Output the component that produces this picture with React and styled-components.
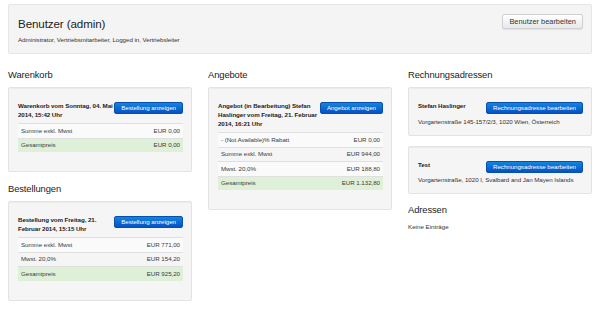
import React from "react";
import styled, { createGlobalStyle } from "styled-components";

const Global = createGlobalStyle`
  html, body { margin: 0; padding: 0; background: #fff; }
  body { font-family: "Liberation Sans", Arial, sans-serif; color: #333; }
  * { box-sizing: border-box; }
`;

const Page = styled.div`
  width: 584px;
  margin: 4px 0 0 8px;
`;

const Hero = styled.div`
  display: flex;
  justify-content: space-between;
  align-items: flex-start;
  background: #f4f4f4;
  border: 1px solid #e6e6e6;
  border-radius: 2px;
  padding: 9px 8px 9px 9px;
`;

const HeroText = styled.div`
  display: flex;
  flex-direction: column;
`;

const H1 = styled.h1`
  margin: 3px 0 0;
  font-size: 11.6px;
  line-height: 14px;
  font-weight: normal;
  letter-spacing: -0.1px;
  color: #222;
`;

const Sub = styled.div`
  margin-top: 5px;
  font-size: 6.2px;
  line-height: 8px;
  letter-spacing: -0.05px;
  color: #333;
`;

const DefaultButton = styled.button`
  font-family: inherit;
  font-size: 7.4px;
  line-height: 9px;
  padding: 2px 6px;
  color: #333;
  background: linear-gradient(#ffffff, #e9e9e9);
  border: 1px solid #d0d0d0;
  border-radius: 2px;
  box-shadow: 0 1px 1px rgba(0, 0, 0, 0.08);
  white-space: nowrap;
`;

const PrimaryButton = styled.button`
  flex: none;
  margin-top: 1px;
  font-family: inherit;
  font-size: 6.2px;
  line-height: 8px;
  padding: 1px 6px;
  letter-spacing: -0.05px;
  color: #fff;
  background: linear-gradient(#1285dd, #0552c6);
  border: 1px solid #0a4fb0;
  border-radius: 2px;
  white-space: nowrap;
`;

const Columns = styled.div`
  display: grid;
  grid-template-columns: repeat(3, 184px);
  column-gap: 16px;
  margin-top: 15px;
  align-items: start;
`;

const Column = styled.div`
  display: flex;
  flex-direction: column;
`;

const H3 = styled.h3`
  margin: 0 0 6px;
  font-size: 9.4px;
  line-height: 12px;
  font-weight: normal;
  letter-spacing: -0.1px;
  color: #222;
`;

const Well = styled.div`
  background: #f5f5f5;
  border: 1px solid #e3e3e3;
  border-radius: 2px;
  box-shadow: inset 0 1px 1px rgba(0, 0, 0, 0.04);
  padding: 13px 8px ${(p) => (p.$compact ? "9px" : "19px")} 9px;
  margin-bottom: ${(p) => (p.$compact ? "10px" : "11px")};
`;

const WellHead = styled.div`
  display: flex;
  align-items: flex-start;
`;

const Title = styled.div`
  flex: 1;
  min-width: 0;
  font-size: 6.2px;
  line-height: 9px;
  font-weight: bold;
  letter-spacing: -0.08px;
  color: #222;
`;

const Table = styled.div`
  margin-top: 4px;
  display: flex;
  flex-direction: column;
`;

const Row = styled.div`
  display: flex;
  justify-content: space-between;
  border-top: 1px solid #e0e0e0;
  padding: 2.75px 3px;
  font-size: 6.2px;
  line-height: 8px;
  letter-spacing: -0.05px;
  color: #3c3c3c;
  background: ${(p) =>
    p.$success ? "#dff0d8" : p.$odd ? "#fafafa" : "transparent"};
`;

const Address = styled.div`
  margin-top: 2.5px;
  font-size: 6.2px;
  line-height: 9px;
  letter-spacing: -0.05px;
  color: #333;
`;

const Empty = styled.div`
  font-size: 6.2px;
  line-height: 9px;
  color: #333;
`;

function PriceTable({ rows, total }) {
  return (
    <Table>
      {rows.map(([label, value], i) => (
        <Row key={label} $odd={i % 2 === 0}>
          <span>{label}</span>
          <span>{value}</span>
        </Row>
      ))}
      <Row $success>
        <span>Gesamtpreis</span>
        <span>{total}</span>
      </Row>
    </Table>
  );
}

function OrderWell({ title, button, rows, total }) {
  return (
    <Well>
      <WellHead>
        <Title>{title}</Title>
        <PrimaryButton>{button}</PrimaryButton>
      </WellHead>
      <PriceTable rows={rows} total={total} />
    </Well>
  );
}

function AddressWell({ name, address }) {
  return (
    <Well $compact>
      <WellHead>
        <Title>{name}</Title>
        <PrimaryButton>Rechnungsadresse bearbeiten</PrimaryButton>
      </WellHead>
      <Address>{address}</Address>
    </Well>
  );
}

export default function App() {
  return (
    <Page>
      <Global />
      <Hero>
        <HeroText>
          <H1>Benutzer (admin)</H1>
          <Sub>Administrator, Vertriebsmitarbeiter, Logged in, Vertriebsleiter</Sub>
        </HeroText>
        <DefaultButton>Benutzer bearbeiten</DefaultButton>
      </Hero>
      <Columns>
        <Column>
          <H3>Warenkorb</H3>
          <OrderWell
            title="Warenkorb vom Sonntag, 04. Mai 2014, 15:42 Uhr"
            button="Bestellung anzeigen"
            rows={[["Summe exkl. Mwst", "EUR 0,00"]]}
            total="EUR 0,00"
          />
          <H3>Bestellungen</H3>
          <OrderWell
            title="Bestellung vom Freitag, 21. Februar 2014, 15:15 Uhr"
            button="Bestellung anzeigen"
            rows={[
              ["Summe exkl. Mwst", "EUR 771,00"],
              ["Mwst. 20,0%", "EUR 154,20"],
            ]}
            total="EUR 925,20"
          />
        </Column>
        <Column>
          <H3>Angebote</H3>
          <OrderWell
            title="Angebot (in Bearbeitung) Stefan Haslinger vom Freitag, 21. Februar 2014, 16:21 Uhr"
            button="Angebot anzeigen"
            rows={[
              ["- (Not Available)% Rabatt", "EUR 0,00"],
              ["Summe exkl. Mwst", "EUR 944,00"],
              ["Mwst. 20,0%", "EUR 188,80"],
            ]}
            total="EUR 1.132,80"
          />
        </Column>
        <Column>
          <H3>Rechnungsadressen</H3>
          <AddressWell
            name="Stefan Haslinger"
            address="Vorgartenstraße 145-157/2/3, 1020 Wien, Österreich"
          />
          <AddressWell
            name="Test"
            address="Vorgartenstraße, 1020 I, Svalbard and Jan Mayen Islands"
          />
          <H3>Adressen</H3>
          <Empty>Keine Einträge</Empty>
        </Column>
      </Columns>
    </Page>
  );
}
